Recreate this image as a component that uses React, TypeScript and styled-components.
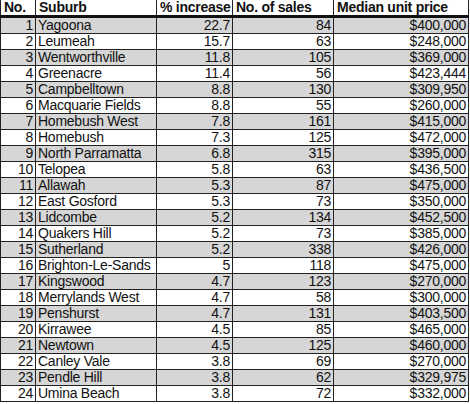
import React from "react";
import styled, { createGlobalStyle } from "styled-components";

const GlobalStyle = createGlobalStyle`
  html, body {
    margin: 0;
    padding: 0;
    background: #ffffff;
  }
  body {
    font-family: "Liberation Sans", Arial, sans-serif;
  }
`;

type Row = [number, string, string, number, string];

const rows: Row[] = [
  [1, "Yagoona", "22.7", 84, "$400,000"],
  [2, "Leumeah", "15.7", 63, "$248,000"],
  [3, "Wentworthville", "11.8", 105, "$369,000"],
  [4, "Greenacre", "11.4", 56, "$423,444"],
  [5, "Campbelltown", "8.8", 130, "$309,950"],
  [6, "Macquarie Fields", "8.8", 55, "$260,000"],
  [7, "Homebush West", "7.8", 161, "$415,000"],
  [8, "Homebush", "7.3", 125, "$472,000"],
  [9, "North Parramatta", "6.8", 315, "$395,000"],
  [10, "Telopea", "5.8", 63, "$436,500"],
  [11, "Allawah", "5.3", 87, "$475,000"],
  [12, "East Gosford", "5.3", 73, "$350,000"],
  [13, "Lidcombe", "5.2", 134, "$452,500"],
  [14, "Quakers Hill", "5.2", 73, "$385,000"],
  [15, "Sutherland", "5.2", 338, "$426,000"],
  [16, "Brighton-Le-Sands", "5", 118, "$475,000"],
  [17, "Kingswood", "4.7", 123, "$270,000"],
  [18, "Merrylands West", "4.7", 58, "$300,000"],
  [19, "Penshurst", "4.7", 131, "$403,500"],
  [20, "Kirrawee", "4.5", 85, "$465,000"],
  [21, "Newtown", "4.5", 125, "$460,000"],
  [22, "Canley Vale", "3.8", 69, "$270,000"],
  [23, "Pendle Hill", "3.8", 62, "$329,975"],
  [24, "Umina Beach", "3.8", 72, "$332,000"],
];

const Table = styled.table`
  border-collapse: collapse;
  table-layout: fixed;
  width: 469px;
  font-family: "Liberation Sans", Arial, sans-serif;
  font-size: 14px;
  letter-spacing: -0.25px;
  color: #111;
`;

const HeadCell = styled.th<{ $w: number }>`
  box-sizing: border-box;
  width: ${(p) => p.$w}px;
  height: 15px;
  padding: 0 0 0 3px;
  line-height: 15px;
  font-weight: bold;
  text-align: left;
  white-space: nowrap;
  overflow: hidden;
  border: 1px solid #222;
  border-top: none;
  border-bottom: 3px solid #111;
`;

const BodyRow = styled.tr<{ $shaded: boolean }>`
  background: ${(p) => (p.$shaded ? "#d6d6d6" : "#ffffff")};
`;

const Cell = styled.td<{ $align?: "left" | "right" }>`
  box-sizing: border-box;
  height: 15px;
  padding: ${(p) => (p.$align === "left" ? "0 0 0 2px" : "0 2px 0 0")};
  line-height: 15px;
  text-align: ${(p) => p.$align ?? "right"};
  white-space: nowrap;
  overflow: hidden;
  border: 1px solid #222;
`;

export default function App() {
  return (
    <>
      <GlobalStyle />
      <Table>
        <thead>
          <tr>
            <HeadCell $w={35}>No.</HeadCell>
            <HeadCell $w={121}>Suburb</HeadCell>
            <HeadCell $w={76}>% increase</HeadCell>
            <HeadCell $w={101}>No. of sales</HeadCell>
            <HeadCell $w={135}>Median unit price</HeadCell>
          </tr>
        </thead>
        <tbody>
          {rows.map(([no, suburb, inc, sales, price]) => (
            <BodyRow key={no} $shaded={no % 2 === 1}>
              <Cell>{no}</Cell>
              <Cell $align="left">{suburb}</Cell>
              <Cell>{inc}</Cell>
              <Cell>{sales}</Cell>
              <Cell>{price}</Cell>
            </BodyRow>
          ))}
        </tbody>
      </Table>
    </>
  );
}
